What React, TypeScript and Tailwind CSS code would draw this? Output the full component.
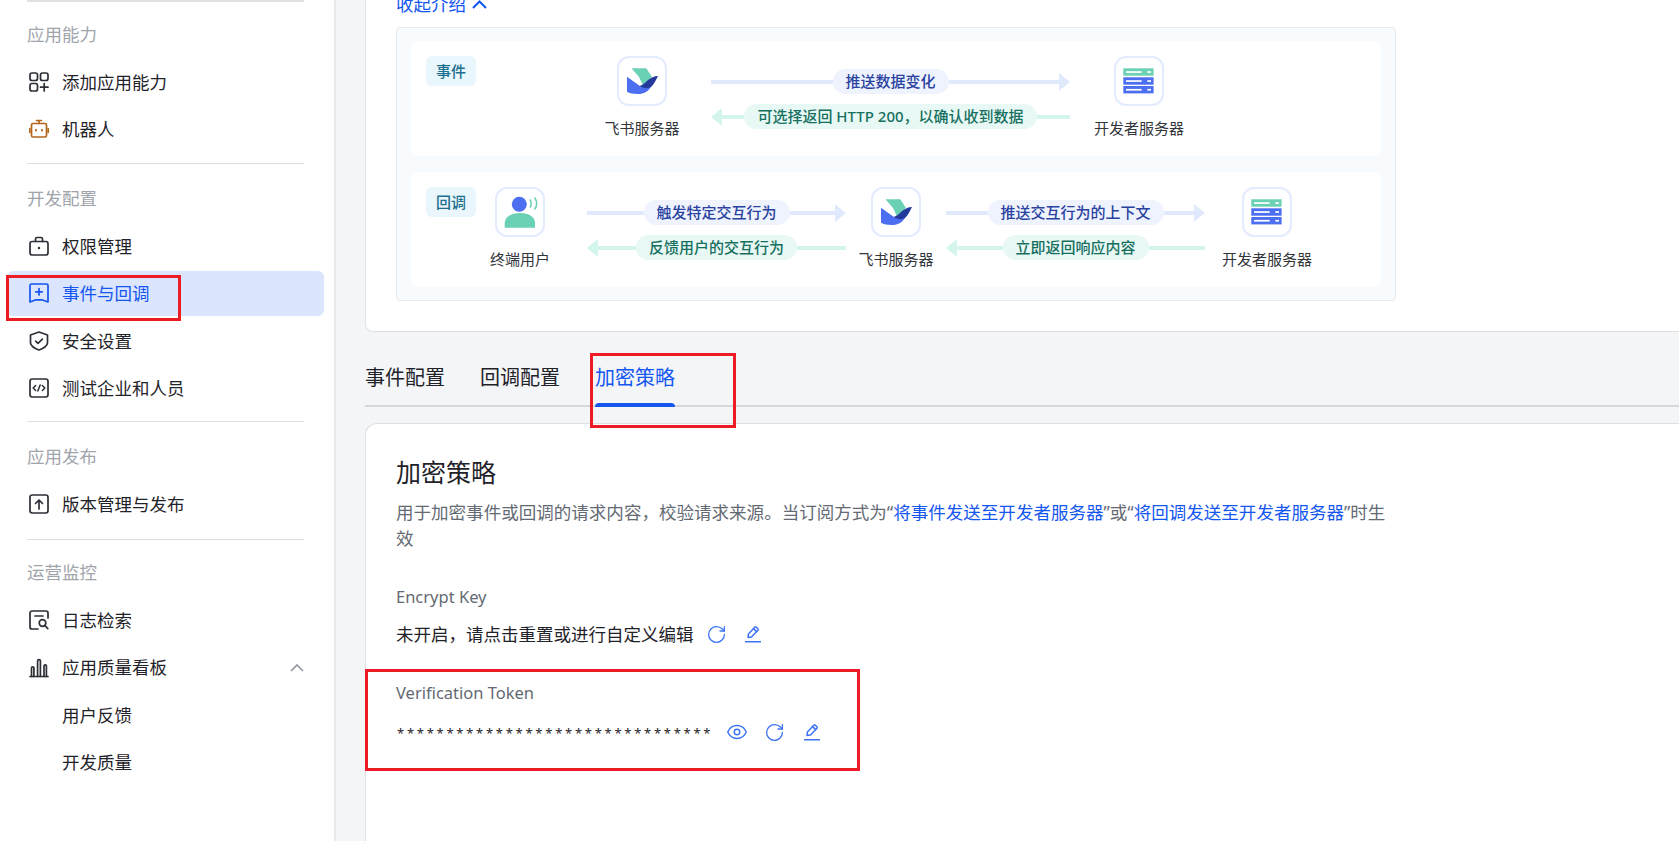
import { ReactNode } from "react";
import { Eye, RotateCw } from "lucide-react";

const ink = "#2b2f36";

function Svg({ children, color = ink }: { children: ReactNode; color?: string }) {
  return (
    <svg width="20" height="20" viewBox="0 0 20 20" fill="none" stroke={color} strokeWidth="1.7" strokeLinecap="round" strokeLinejoin="round">
      {children}
    </svg>
  );
}

const navIcons: Record<string, ReactNode> = {
  add: (
    <Svg>
      <rect x="1" y="1" width="7.5" height="7.5" rx="2" />
      <rect x="11.5" y="1" width="7.5" height="7.5" rx="2" />
      <rect x="1" y="11.5" width="7.5" height="7.5" rx="2" />
      <path d="M15.2 11.5v7.5M11.5 15.2h7.5" />
    </Svg>
  ),
  bot: (
    <Svg color="#b4661a">
      <rect x="2.5" y="4.5" width="15" height="13.5" rx="1.5" />
      <path d="M7.5 1.5h5M10 1.5v3M.8 9.5v4M19.2 9.5v4" />
      <path d="M7 11v.4M13 11v.4" strokeWidth="2" />
    </Svg>
  ),
  lock: (
    <Svg>
      <rect x="1" y="5.5" width="18" height="13.5" rx="2.2" />
      <path d="M6.5 5.5V3a1.5 1.5 0 0 1 1.5-1.5h4A1.5 1.5 0 0 1 13.5 3v2.5" />
      <circle cx="10" cy="12" r="1.2" fill={ink} stroke="none" />
    </Svg>
  ),
  event: (
    <Svg color="#1456f0">
      <path d="M2.5 1h15A1.5 1.5 0 0 1 19 2.5V19l-6-2.2h-6L1 19V2.5A1.5 1.5 0 0 1 2.5 1z" />
      <path d="M10 5.5v6.5M6.8 8.8h6.4" />
    </Svg>
  ),
  shield: (
    <Svg>
      <path d="M10 1l8.5 3v8c0 2.6-4.2 5.8-8.5 7-4.3-1.2-8.5-4.4-8.5-7V4z" />
      <path d="M6.6 10.2l2.4 2.2 4.4-4.2" />
    </Svg>
  ),
  code: (
    <Svg>
      <rect x="1" y="1" width="18" height="18" rx="2.2" />
      <path d="M6.6 7.5L4.2 10l2.4 2.5M13.4 7.5l2.4 2.5-2.4 2.5M11.2 7l-2.4 6" strokeWidth="1.5" />
    </Svg>
  ),
  upload: (
    <Svg>
      <rect x="1" y="1" width="18" height="18" rx="2.2" />
      <path d="M10 15V6.5M6.5 9.5L10 6l3.5 3.5" />
    </Svg>
  ),
  log: (
    <Svg>
      <path d="M19 8V3a2 2 0 0 0-2-2H3a2 2 0 0 0-2 2v14a2 2 0 0 0 2 2h6" />
      <path d="M6 6h8" />
      <circle cx="13.5" cy="13" r="3.3" />
      <path d="M16 15.6l2.8 3" />
    </Svg>
  ),
  chart: (
    <Svg>
      <path d="M1 18.5h18" />
      <path d="M2.5 18.5V10a1.2 1.2 0 0 1 2.4 0v8.5" />
      <path d="M8.6 18.5V3a1.4 1.4 0 0 1 2.8 0v15.5" />
      <path d="M15 18.5V8a1.2 1.2 0 0 1 2.4 0v10.5" />
    </Svg>
  ),
};

function Divider({ className }: { className: string }) {
  return <div className={"mr-[30px] ml-[27px] bg-[#dfe0e3] " + className} />;
}

function GroupLabel({ text, className = "" }: { text: string; className?: string }) {
  return <div className={"flex h-[47.5px] items-center pl-[27px] text-[17.5px] text-[#a0a4ab] " + className}>{text}</div>;
}

function NavItem({ icon, text, active, chevron }: { icon?: string; text: string; active?: boolean; chevron?: boolean }) {
  return (
    <div className="flex h-[47.5px] items-center">
      <div className={"ml-[7px] flex h-[45px] w-[317px] items-center rounded-md pl-[22px] text-[17.5px] " + (active ? "bg-[#dbe5fd] text-[#1456f0]" : "text-[#1f2329]")}>
        <span className="flex w-[33px] shrink-0 items-center">{icon ? navIcons[icon] : null}</span>
        <span className="flex-1">{text}</span>
        {chevron && (
          <svg className="mr-[20px]" width="14" height="8" viewBox="0 0 14 8" fill="none" stroke="#8f959e" strokeWidth="1.6">
            <path d="M1 7l6-6 6 6" />
          </svg>
        )}
      </div>
    </div>
  );
}

function Sidebar() {
  return (
    <aside className="h-full w-[336px] shrink-0 border-r-2 border-[#e8e9eb] bg-white">
      <Divider className="h-[1.5px]" />
      <GroupLabel text="应用能力" className="mt-[9px]" />
      <NavItem icon="add" text="添加应用能力" />
      <NavItem icon="bot" text="机器人" />
      <Divider className="mt-[9.75px] h-[1.5px]" />
      <GroupLabel text="开发配置" className="mt-[10.25px]" />
      <NavItem icon="lock" text="权限管理" />
      <NavItem icon="event" text="事件与回调" active />
      <NavItem icon="shield" text="安全设置" />
      <NavItem icon="code" text="测试企业和人员" />
      <Divider className="mt-[9.25px] h-px" />
      <GroupLabel text="应用发布" className="mt-[10.5px]" />
      <NavItem icon="upload" text="版本管理与发布" />
      <Divider className="mt-[10.75px] h-[1.5px]" />
      <GroupLabel text="运营监控" className="mt-[8.75px]" />
      <NavItem icon="log" text="日志检索" />
      <NavItem icon="chart" text="应用质量看板" chevron />
      <NavItem text="用户反馈" />
      <NavItem text="开发质量" />
    </aside>
  );
}

function Tile({ label, children }: { label: string; children: ReactNode }) {
  return (
    <div className="flex w-[50px] shrink-0 flex-col items-center">
      <div className="h-[50px] w-[50px] rounded-xl border-2 border-[#e3ebfe] bg-white">
        <svg className="-m-[2px]" width="50" height="50" viewBox="0 0 50 50">{children}</svg>
      </div>
      <div className="mt-[10px] text-[15px] leading-[24px] whitespace-nowrap text-[#33363b]">{label}</div>
    </div>
  );
}

const feishu = (
  <>
    <path d="M14.5 12.3H29.3L35 21L26 29.5L22 21Z" fill="#6bd1b5" />
    <path d="M10 20.7L24.3 31L34 31C31 35.5 27 38 21 38C16 38 12.5 37 10 35.7Z" fill="#4c6ef0" />
    <path d="M41 20C37 20 33 22 30 25C27.5 27.5 25 29.5 22.5 30L24.3 31C28 32.5 31 32.5 34 31C37 28.5 39 24 41 20Z" fill="#23399b" />
  </>
);

const server = (
  <>
    {[12.3, 21.3, 30].map((y, i) => (
      <g key={y}>
        <rect x="9.3" y={y} width="30.3" height="7.4" fill={i === 0 ? "#6bd1b5" : "#4c6ef0"} />
        <rect x="12" y={y + 2.9} width="15.7" height="1.7" fill="#fff" />
        <rect x="33.3" y={y + 2.9} width="3.7" height="1.7" fill="#fff" />
      </g>
    ))}
  </>
);

const user = (
  <>
    <circle cx="24.3" cy="17.3" r="7.5" fill="#4c6ef0" />
    <path d="M9.7 40.7V36C9.7 30 16 26 25 26C34 26 40 30 40 36V40.7Z" fill="#6bd1b5" />
    <path d="M35 12.5C36.5 15 36.5 18 35 20.5M39.5 10.5C42.5 14.5 42.5 18.5 39.5 22.5" fill="none" stroke="#6bd1b5" strokeWidth="1.6" />
  </>
);

function Flow({ top, bottom, width }: { top: string; bottom: string; width: string }) {
  return (
    <div className={"mt-[13px] flex shrink-0 flex-col gap-[10px] " + width}>
      <div className="flex h-[25px] items-center">
        <div className="h-[4px] flex-1 bg-[#e1eafd]" />
        <div className="flex h-[25px] items-center rounded-full bg-[#eef3fe] px-[13px] text-[15px] font-medium whitespace-nowrap text-[#2a429f]">{top}</div>
        <div className="flex flex-1 items-center">
          <div className="h-[4px] flex-1 bg-[#e1eafd]" />
          <svg width="11" height="18" viewBox="0 0 11 18" className="shrink-0"><path d="M0 0L11 9L0 18Z" fill="#e1eafd" /></svg>
        </div>
      </div>
      <div className="flex h-[25px] items-center">
        <div className="flex flex-1 items-center">
          <svg width="11" height="18" viewBox="0 0 11 18" className="shrink-0"><path d="M11 0L0 9L11 18Z" fill="#d3f5ee" /></svg>
          <div className="h-[4px] flex-1 bg-[#d3f5ee]" />
        </div>
        <div className="flex h-[25px] items-center rounded-full bg-[#e8f8f5] px-[13px] text-[15px] font-medium whitespace-nowrap text-[#17705f]">{bottom}</div>
        <div className="h-[4px] flex-1 bg-[#d3f5ee]" />
      </div>
    </div>
  );
}

function Tag({ text }: { text: string }) {
  return (
    <div className="flex h-[30px] w-[50px] shrink-0 items-center justify-center rounded-md bg-[#e9f6fc] text-[15px] font-medium text-[#1d6f8f]">{text}</div>
  );
}

function Diagram() {
  return (
    <div className="flex h-[274px] w-[1000px] shrink-0 flex-col gap-[16px] rounded border border-[#e5ebf0] bg-[#f7fbfe] px-[14px] pt-[13px]">
      <div className="flex h-[115px] shrink-0 rounded-lg bg-white px-[15px] pt-[15px]">
        <Tag text="事件" />
        <div className="ml-[141px]"><Tile label="飞书服务器">{feishu}</Tile></div>
        <div className="ml-[44px]"><Flow width="w-[359px]" top="推送数据变化" bottom="可选择返回 HTTP 200，以确认收到数据" /></div>
        <div className="ml-[44px]"><Tile label="开发者服务器">{server}</Tile></div>
      </div>
      <div className="flex h-[115px] shrink-0 rounded-lg bg-white px-[15px] pt-[15px]">
        <Tag text="回调" />
        <div className="ml-[19px]"><Tile label="终端用户">{user}</Tile></div>
        <div className="ml-[42px]"><Flow width="w-[259px]" top="触发特定交互行为" bottom="反馈用户的交互行为" /></div>
        <div className="ml-[25px]"><Tile label="飞书服务器">{feishu}</Tile></div>
        <div className="ml-[25px]"><Flow width="w-[259px]" top="推送交互行为的上下文" bottom="立即返回响应内容" /></div>
        <div className="ml-[37px]"><Tile label="开发者服务器">{server}</Tile></div>
      </div>
    </div>
  );
}

function PencilIcon() {
  return (
    <svg className="ml-[18.6px]" width="16" height="18" viewBox="0 0 16 18" fill="none" stroke="#3f74f5" strokeWidth="1.5" strokeLinejoin="round" strokeLinecap="round">
      <path d="M3 12.5L3.4 9L9.8 2.2a1 1 0 0 1 1.5 0l1.6 1.6a1 1 0 0 1 0 1.5L6.5 12Z" />
      <path d="M8.6 3.6l3 3" />
      <path d="M.5 16.7h15" />
    </svg>
  );
}

function RefreshIcon({ className }: { className: string }) {
  return <RotateCw className={className} size={21} strokeWidth={1.5} color="#3f74f5" />;
}

export default function App() {
  return (
    <div className="relative flex h-[841px] w-full overflow-hidden bg-[#f4f5f7] font-['Noto_Sans','Noto_Sans_CJK_SC',sans-serif]">
      <Sidebar />
      <main className="min-w-0 flex-1 pl-[29px]">
        <section className="flex h-[332px] flex-col justify-end rounded-bl-lg border-b border-l border-[#dee0e3] bg-white pb-[30px] pl-[30px]">
          <div className="mb-[11px] flex shrink-0 items-center gap-[6px] text-[17.5px] leading-[24px] text-[#1456f0]">
            收起介绍
            <svg width="15" height="9" viewBox="0 0 15 9" fill="none" stroke="#1456f0" strokeWidth="2"><path d="M1 8l6.5-6.5L14 8" /></svg>
          </div>
          <Diagram />
        </section>

        <div className="mt-[32px] flex gap-[35px] border-b-2 border-[#d5d7db] pb-[13px] text-[20px] leading-[28px] text-[#1f2329]">
          <span>事件配置</span>
          <span>回调配置</span>
          <span className="relative text-[#1456f0]">
            加密策略
            <span className="absolute right-0 bottom-[-15px] left-0 h-[4px] rounded-t bg-[#1456f0]" />
          </span>
        </div>

        <section className="mt-[16px] h-[500px] rounded-tl-xl border-t border-l border-[#dee0e3] bg-white pt-[32px] pl-[30px]">
          <h2 className="text-[25px] leading-[32px] font-normal text-[#1f2329]">加密策略</h2>
          <p className="mt-[12px] w-[998px] text-[17.55px] leading-[25.6px] text-[#646a73]">
            用于加密事件或回调的请求内容，校验请求来源。当订阅方式为“<span className="text-[#1456f0]">将事件发送至开发者服务器</span>”或“<span className="text-[#1456f0]">将回调发送至开发者服务器</span>”时生效
          </p>
          <div className="mt-[34px] text-[16.5px] leading-[24px] text-[#646a73]">Encrypt Key</div>
          <div className="mt-[13px] flex h-[24px] items-center text-[17.5px] text-[#1f2329]">
            <span>未开启，请点击重置或进行自定义编辑</span>
            <RefreshIcon className="ml-[12.4px]" />
            <PencilIcon />
          </div>
          <div className="mt-[35px] text-[16.5px] leading-[24px] text-[#646a73]">Verification Token</div>
          <div className="mt-[15px] flex h-[24px] items-center text-[#1f2329]">
            <span className="pt-[4px] pl-px text-[13px] tracking-[2.72px]">********************************</span>
            <Eye className="ml-[13px]" size={22} strokeWidth={1.6} color="#3f74f5" />
            <RefreshIcon className="ml-[16px]" />
            <PencilIcon />
          </div>
        </section>
      </main>

      <div className="absolute top-[275px] left-[6px] h-[46px] w-[175px] border-[3px] border-[#ed1c24]" />
      <div className="absolute top-[353px] left-[590px] h-[75px] w-[146px] border-[3px] border-[#ed1c24]" />
      <div className="absolute top-[669px] left-[365px] h-[102px] w-[495px] border-[3px] border-[#ed1c24]" />
    </div>
  );
}
